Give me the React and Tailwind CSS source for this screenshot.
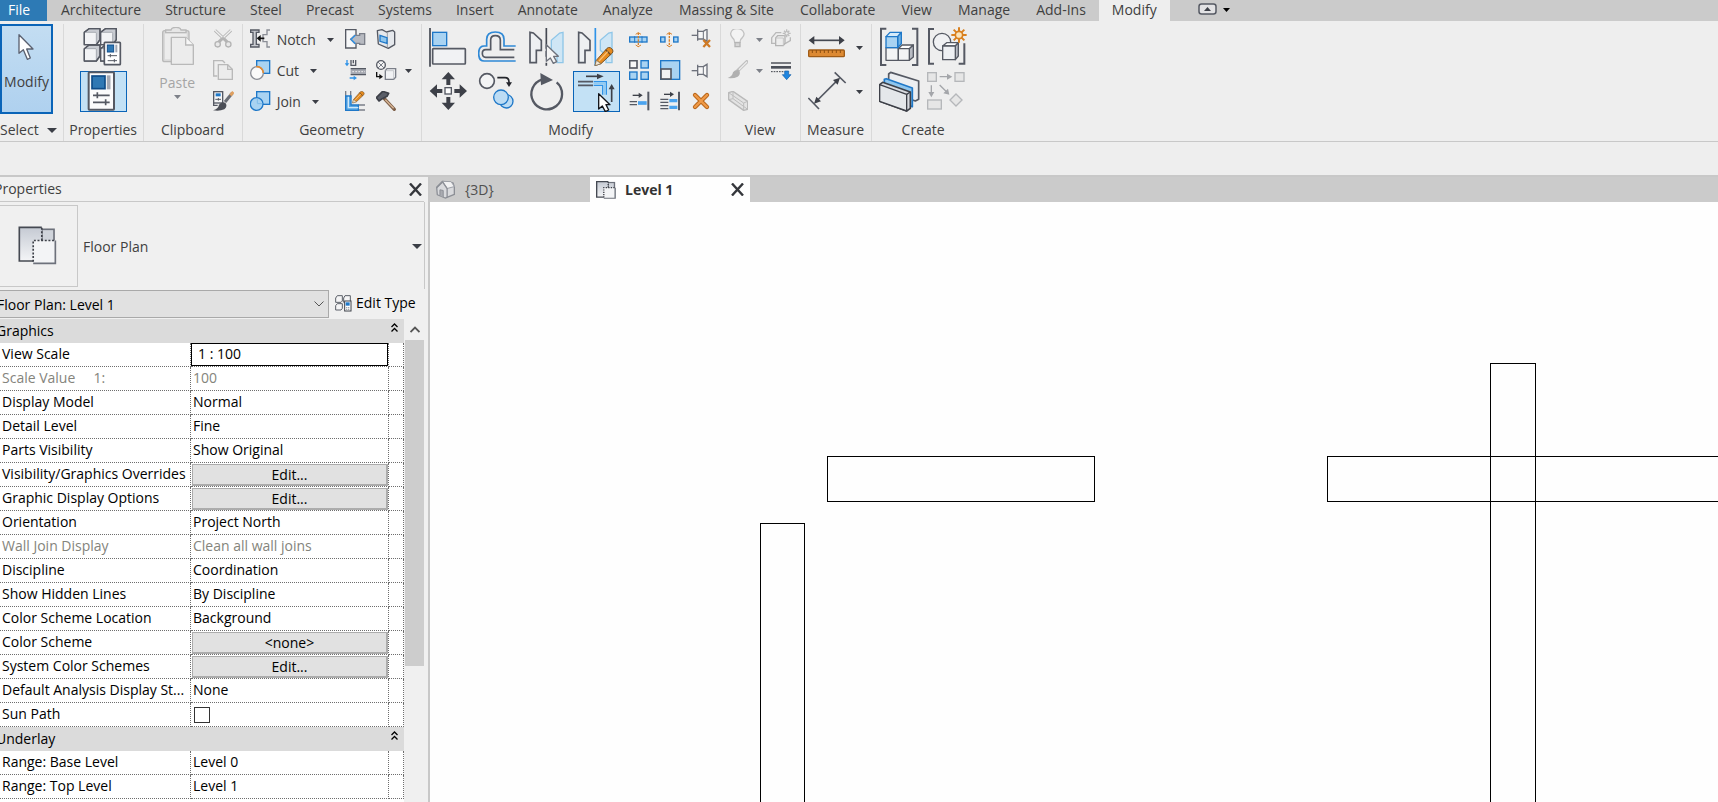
import React from "react";

const OUT = "#555963";
const BLUE = "#1f78c8";
const SKY = "#a9d3f2";
const ORANGE = "#d9822b";

function Icon({ box, w = 21, h = w, children }) {
  return (
    <svg
      width={w}
      height={h}
      viewBox={`${box} ${w * 3} ${h * 3}`}
      fill="none"
      strokeWidth="5"
      className="shrink-0"
      aria-hidden="true"
    >
      {children}
    </svg>
  );
}

function Caret({ className = "fill-[#3b3e46]", w = 7, h = 4 }) {
  return (
    <svg width={w} height={h} viewBox="0 0 14 8" preserveAspectRatio="none" className={`shrink-0 ${className}`} aria-hidden="true">
      <path d="M0 0H14L7 8Z" />
    </svg>
  );
}

/* ---------- large icons (41px) ---------- */

const Cursor = () => (
  <Icon box="50 99" w={21} h={27}>
    <path d="M59 104V160L72 149L84 178L93 174L82 147H101Z" fill="#fff" stroke="#5b6170" strokeWidth="4" strokeLinejoin="round" />
  </Icon>
);

const TypeProperties = () => (
  <Icon box="246 81" w={41}>
    {[
      [250, 97],
      [299, 97],
      [250, 146],
      [299, 146],
    ].map(([x, y]) => (
      <g key={`${x}-${y}`} stroke={OUT} strokeWidth="4" strokeLinejoin="round">
        <path d={`M${x} ${y}L${x + 14} ${y - 11}H${x + 47}V${y + 22}L${x + 36} ${y + 37}H${x}Z`} fill="#c9ccd2" />
        <rect x={x} y={y} width="36" height="37" rx="3" fill="#f2f3f5" stroke="#8b8f98" strokeWidth="2" />
        <path d={`M${x} ${y}L${x + 14} ${y - 11}H${x + 47}V${y + 22}L${x + 36} ${y + 37}H${x}Z`} />
      </g>
    ))}
    <rect x="310" y="127" width="48" height="67" rx="2" fill="#fff" stroke={OUT} />
    <rect x="319" y="135" width="19" height="21" fill="#2f78b4" stroke="#124f8c" strokeWidth="3" />
    <path d="M346 134V157" stroke="#a4a8b2" strokeWidth="6" />
    <path d="M320 167H348M328 162V172M320 182H348M340 177V187" stroke={OUT} strokeWidth="3" />
  </Icon>
);

const PropertiesDoc = () => (
  <Icon box="246 213" w={41}>
    <rect x="263" y="217" width="76" height="112" rx="2" fill="#fbfbfc" stroke={OUT} strokeWidth="6" />
    <rect x="273" y="228" width="39" height="38" fill="#2f78b4" stroke="#0f4c88" />
    <path d="M323 226V268" stroke="#a4a8b2" strokeWidth="11" />
    <path d="M276 286H326M289 277V295M276 307H326M314 298V316" stroke={OUT} />
  </Icon>
);

const PasteIcon = () => (
  <Icon box="468 81" w={41}>
    <rect x="485" y="92" width="79" height="93" rx="6" fill="#d9d9d9" stroke="#b9b9b9" strokeWidth="4" />
    <rect x="492" y="100" width="65" height="78" fill="#ececec" />
    <path d="M494 98V90H510Q512 82 525 82Q538 82 540 90H555V98Z" fill="#e6e6e6" stroke="#b9b9b9" strokeWidth="4" />
    <path d="M511 112H554L577 135V193H511Z" fill="#ececec" stroke="#b9b9b9" strokeWidth="4" strokeLinejoin="round" />
    <path d="M554 112V135H577" fill="#f7f7f7" stroke="#b9b9b9" strokeWidth="4" />
  </Icon>
);

const AlignIcon = () => (
  <Icon box="24 81" w={41}>
    <path d="M27 84V200" stroke="#444852" />
    <rect x="35" y="97" width="42" height="40" fill={SKY} stroke={BLUE} strokeWidth="4" />
    <rect x="35" y="146" width="98" height="46" rx="2" fill="#f1f2f4" stroke={OUT} />
  </Icon>
);

const OffsetIcon = () => (
  <Icon box="171 81" w={41}>
    <path d="M284 138H249V118Q249 96 223 96Q197 96 197 118V138H189Q173 138 173 160Q173 183 189 183H284" stroke="#2f89d6" strokeWidth="5" />
    <path d="M280 149H238V120Q238 107 223 107Q209 107 209 120V149H194Q184 149 184 160Q184 172 194 172H280" stroke={OUT} strokeWidth="5" />
  </Icon>
);

const MirrorPickIcon = () => (
  <Icon box="318 81" w={41}>
    <path d="M327 97L337 99L361 121V151H346V188H327Z" fill="#eef0f2" stroke={OUT} />
    <path d="M426 97L416 99L391 121V151L408 165V188H426Z" fill="#cfe6f5" stroke="#8fc6e8" strokeWidth="4" />
    <path d="M376 84V146M376 153V170M376 188V197" stroke="#444852" />
    <path d="M376 134V184L388 174L397 190L407 185L398 169H412Z" fill="#f4f4f4" stroke="#6d717b" strokeWidth="4" strokeLinejoin="round" />
  </Icon>
);

const Pencil = ({ x, y, s = 1 }) => (
  <g transform={`translate(${x} ${y}) scale(${s})`}>
    <path d="M0 56L4 40L36 4Q40 0 46 2L52 7Q56 12 52 18L18 50Z" fill="#e58a1f" stroke="#7a5528" strokeWidth="3" strokeLinejoin="round" />
    <path d="M0 56L4 40L18 50Z" fill="#f4e6d0" stroke="#7a6a50" strokeWidth="2" />
    <path d="M32 8L47 23" stroke="#6a4a26" strokeWidth="4" />
    <path d="M12 42L38 14" stroke="#f8c27a" strokeWidth="4" />
  </g>
);

const MirrorDrawIcon = () => (
  <Icon box="465 81" w={41}>
    <path d="M473 97L483 99L507 121V151H492V188H473Z" fill="#eef0f2" stroke={OUT} />
    <path d="M573 97L563 99L538 121V151L555 165V188H573Z" fill="#cfe6f5" stroke="#8fc6e8" strokeWidth="4" />
    <path d="M523 84V197" stroke="#2f93e8" />
    <Pencil x={522} y={141} />
  </Icon>
);

const MoveIcon = () => (
  <Icon box="24 213" w={41}>
    <g fill="#3d4048">
      <path d="M82 216L102 238H88V255H76V238H62Z" />
      <path d="M82 330L102 308H88V291H76V308H62Z" />
      <path d="M26 273L48 253V267H64V279H48V293Z" />
      <path d="M138 273L116 253V267H100V279H116V293Z" />
    </g>
    <rect x="72" y="263" width="19" height="19" fill="#fff" stroke={OUT} strokeWidth="4" />
  </Icon>
);

const CopyModIcon = () => (
  <Icon box="171 213" w={41}>
    <circle cx="198" cy="243" r="22" fill="#f3f4f5" stroke={OUT} />
    <path d="M229 233H252Q264 233 264 246V252" stroke="#23252b" />
    <path d="M255 247H273L264 261Z" fill="#23252b" />
    <circle cx="256" cy="304" r="20" fill="#bcdcf4" stroke={BLUE} strokeWidth="4" />
    <circle cx="240" cy="292" r="22" fill="#bcdcf4" stroke={BLUE} strokeWidth="4" />
  </Icon>
);

const RotateIcon = () => (
  <Icon box="318 213" w={41}>
    <path d="M407 247A46 46 0 1 1 364 238" stroke="#555963" strokeWidth="7" />
    <path d="M358 219L396 240L360 256Z" fill="#555963" />
  </Icon>
);

const TrimIcon = () => (
  <Icon box="465 213" w={41}>
    <path d="M495 229H533" stroke="#3d4048" />
    <path d="M528 221L548 229L528 238Z" fill="#3d4048" />
    <path d="M471 245H516M471 256H516" stroke={OUT} strokeWidth="5" />
    <path d="M518 245H556V284M518 256H545V284" stroke="#2f93e8" strokeWidth="4" />
    <path d="M518 250H551V284" stroke="#8fcaf2" strokeWidth="5" />
    <path d="M572 306V262" stroke="#3d4048" />
    <path d="M563 268L572 252L581 268Z" fill="#3d4048" />
    <path d="M533 281V327L544 318L553 335L563 330L555 314H567Z" fill="#fff" stroke="#15171c" strokeWidth="4" strokeLinejoin="round" />
  </Icon>
);

const MeasureIcon = () => (
  <Icon box="324 81" w={41}>
    <path d="M340 121H420" stroke="#444852" />
    <path d="M326 121L343 108V134ZM434 121L417 108V134Z" fill="#3d4048" />
    <rect x="326" y="150" width="107" height="20" rx="3" fill="#dd8a33" stroke="#a05c17" strokeWidth="4" />
    <path d="M337 150V159M349 150V159M361 150V159M373 150V159M385 150V159M397 150V159M409 150V159M421 150V159" stroke="#8d5012" strokeWidth="3" />
  </Icon>
);

const DimensionIcon = () => (
  <Icon box="324 213" w={41}>
    <path d="M325 294L357 327M404 217L437 249M350 303L412 241" stroke="#555963" />
    <path d="M342 311L349 290L363 304ZM420 233L413 254L399 240Z" fill="#3d4048" />
  </Icon>
);

const GroupIcon = () => (
  <Icon box="531 81" w={41}>
    <path d="M553 86H537V195H553M630 86H646V195H630" stroke={OUT} strokeWidth="6" />
    <g stroke={OUT} strokeWidth="4" strokeLinejoin="round">
      <path d="M552 143H589V181H552Z" fill="#f3f4f5" />
      <path d="M589 146L600 135H634L622 146Z" fill="#fff" />
      <path d="M622 146L634 135V171L622 181Z" fill="#b9bcc4" />
      <path d="M589 146H622V181H589Z" fill="#f3f4f5" />
    </g>
    <g stroke={BLUE} strokeWidth="4" strokeLinejoin="round">
      <path d="M552 110L564 97H598L587 110Z" fill="#d5ebfa" />
      <path d="M587 110L598 97V131L587 143Z" fill="#6fb3e6" />
      <path d="M552 110H587V143H552Z" fill={SKY} />
    </g>
  </Icon>
);

const SimilarIcon = () => (
  <Icon box="675 81" w={41}>
    <path d="M696 87H681V191H696M770 191H787V130" stroke={OUT} strokeWidth="6" />
    <circle cx="720" cy="126" r="26" fill="#f0f1f3" stroke={OUT} strokeWidth="4" />
    <g stroke={OUT} strokeWidth="4" strokeLinejoin="round">
      <path d="M722 138L734 128H769L760 138Z" fill="#fff" />
      <path d="M760 138L769 128V168L760 179Z" fill="#b9bcc4" />
      <path d="M722 138H760V179H722Z" fill="#eef0f3" />
    </g>
    <path d="M771 82V128M748 105H794M755 89L787 121M787 89L755 121" stroke="#d9801f" strokeWidth="6" />
    <circle cx="771" cy="105" r="11" fill="#fbe3b8" stroke="#d9801f" />
  </Icon>
);

const AssemblyIcon = () => (
  <Icon box="531 213" w={41}>
    <g strokeLinejoin="round">
      <path d="M560 222L566 217L650 243V298L640 303L560 274Z" fill="#eceef1" stroke={OUT} />
      <path d="M547 238L553 236L631 264V320L547 290Z" fill="#8fc6ee" stroke={BLUE} />
      <path d="M533 254L542 247L625 276V325L614 333L533 304Z" fill="#d8dbe0" stroke="#3d4048" />
      <path d="M533 254L614 283V333L533 304Z" fill="#e4e7ea" stroke="#3d4048" strokeWidth="4" />
      <path d="M614 283L625 276" stroke="#3d4048" strokeWidth="4" />
    </g>
  </Icon>
);

const PartsIcon = () => (
  <Icon box="675 213" w={41}>
    <g stroke="#b5b7ba" strokeWidth="4" fill="#e6e6e6">
      <rect x="677" y="218" width="26" height="26" />
      <rect x="759" y="218" width="27" height="26" />
      <rect x="677" y="300" width="41" height="27" />
      <path d="M762 282L780 300L762 318L744 300Z" />
      <path d="M713 230H740M688 256V280M713 255L735 277" fill="none" stroke="#a4a6aa" />
    </g>
    <path d="M735 221L751 230L735 239ZM679 276H697L688 292ZM742 284L724 280L738 266Z" fill="#a4a6aa" />
  </Icon>
);

/* ---------- small icons (21px) ---------- */

const CutClip = () => (
  <Icon box="636 87">
    <path d="M642 91L684 131M690 91L648 131" stroke="#b4b4b4" strokeWidth="9" />
    <path d="M642 91L664 112M690 91L668 112" stroke="#efefef" strokeWidth="4" />
    <ellipse cx="650" cy="133" rx="8" ry="8" fill="#e8e8e8" stroke="#b4b4b4" strokeWidth="4" />
    <ellipse cx="682" cy="133" rx="8" ry="8" fill="#e8e8e8" stroke="#b4b4b4" strokeWidth="4" />
  </Icon>
);

const CopyClip = () => (
  <Icon box="636 180">
    <path d="M649 228H638V182H665L672 189" stroke="#b9b9b9" strokeWidth="4" />
    <path d="M652 194H680L694 208V238H652Z" fill="#ececec" stroke="#b9b9b9" strokeWidth="4" />
    <path d="M680 194V208H694" stroke="#b9b9b9" strokeWidth="4" />
  </Icon>
);

const MatchType = () => (
  <Icon box="636 273">
    <path d="M665 275H638V316H650" fill="#f7f7f7" stroke={OUT} strokeWidth="4" />
    <rect x="638" y="275" width="27" height="34" fill="#f7f7f7" stroke={OUT} strokeWidth="4" />
    <rect x="644" y="280" width="15" height="9" fill={BLUE} />
    <path d="M643 298H660M652 294V302" stroke={OUT} strokeWidth="3" />
    <path d="M694 279L672 306" stroke="#6a6d75" strokeWidth="9" />
    <path d="M697 276L688 286" stroke="#e0a060" strokeWidth="9" />
    <path d="M636 331Q652 327 654 314Q662 303 673 308Q681 318 670 328Q655 335 636 331Z" fill="#4c4f57" />
  </Icon>
);

const NotchIcon = () => (
  <Icon box="27 87">
    <path d="M29 90H54V97H46V133H54V141H29V133H36V97H29Z" fill="#c9cbd0" stroke={OUT} strokeWidth="4" />
    <path d="M87 90H78V104H66V125H78V141H87" stroke="#8b8e96" strokeWidth="4" />
    <path d="M52 115H70" stroke="#111" />
    <path d="M47 115L59 105V125Z" fill="#111" />
  </Icon>
);

const CutGeo = () => (
  <Icon box="27 180">
    <rect x="47" y="182" width="39" height="38" fill={SKY} stroke={BLUE} strokeWidth="4" />
    <circle cx="48" cy="219" r="19" fill="#fafafa" stroke="#8b8e96" strokeWidth="4" />
    <path d="M46 200A19 19 0 0 1 67 219" stroke="#e58a2f" />
  </Icon>
);

const JoinGeo = () => (
  <Icon box="27 273">
    <rect x="47" y="275" width="39" height="38" fill={SKY} stroke={BLUE} strokeWidth="4" />
    <circle cx="47" cy="312" r="19" fill={SKY} stroke={BLUE} strokeWidth="4" />
    <path d="M49 295V310M49 311H64" stroke="#7fbcea" strokeWidth="3" />
  </Icon>
);

const CopingIcon = () => (
  <Icon box="312 87">
    <path d="M314 89H345V107L330 118L345 130V144H314Z" fill="#f7f8f9" stroke={OUT} strokeWidth="4" />
    <path d="M341 106H356V101H371V133H356V130H341L329 118Z" fill="#b7bac1" stroke="#7b7f89" strokeWidth="4" />
    <path d="M343 106L330 118L343 131" stroke="#2f93e8" strokeWidth="4" />
  </Icon>
);

const WallOpening = () => (
  <Icon box="405 87">
    <path d="M409 92L423 89L436 96L455 91L461 96V134L442 145L412 132Z" fill="#e5e8ec" stroke={OUT} strokeWidth="4" strokeLinejoin="round" />
    <path d="M439 96V142" stroke="#9b9fa8" strokeWidth="3" />
    <path d="M417 106L438 113V130L417 124Z" fill="#8fc6ee" stroke={BLUE} strokeWidth="4" />
  </Icon>
);

const BeamJoins = () => (
  <Icon box="312 180">
    <path d="M318 180V192M326 234H341" stroke="#2f93e8" strokeWidth="4" />
    <path d="M311 190H325L318 199ZM338 227L348 234L338 241Z" fill="#2f93e8" />
    <path d="M330 180V196H344V180M337 180V190" stroke={OUT} strokeWidth="4" />
    <rect x="329" y="206" width="46" height="18" fill="#a5a8b0" />
    <path d="M329 206H375M329 224H375" stroke={OUT} strokeWidth="4" />
    <path d="M334 215H372" stroke="#eee" strokeWidth="3" strokeDasharray="5 4" />
  </Icon>
);

const UnjoinIcon = () => (
  <Icon box="405 180">
    <circle cx="420" cy="195" r="13" fill="#f4f4f4" stroke={OUT} strokeWidth="4" />
    <path d="M411 186L429 204M429 186L411 204" stroke="#7b7f89" strokeWidth="3" />
    <path d="M407 216V230H418" stroke="#111" strokeWidth="4" />
    <path d="M415 222L426 230L415 238Z" fill="#111" />
    <path d="M433 212L438 206H464V232L458 238H433Z" fill="#f1f2f4" stroke="#7b7f89" strokeWidth="4" />
    <path d="M458 238V212H433" stroke="#b0b3ba" strokeWidth="2" />
  </Icon>
);

const WallJoins = () => (
  <Icon box="312 273">
    <path d="M314 273V295M329 273V295M352 315H372M352 330H372" stroke="#7b7f89" strokeWidth="4" />
    <path d="M314 288V331H352V315H330V288Z" fill="#59a8e6" stroke={BLUE} strokeWidth="4" />
    <path d="M322 290V323H352" stroke="#cfe8fa" strokeWidth="4" />
    <Pencil x={335} y={273} s={0.64} />
  </Icon>
);

const HammerIcon = () => (
  <Icon box="405 273">
    <path d="M430 296L460 328" stroke="#7d5f48" strokeWidth="10" strokeLinecap="round" />
    <path d="M433 299L458 325" stroke="#d7b596" strokeWidth="4" />
    <path d="M406 293L425 274L443 280L438 289L424 296L414 303Z" fill="#5a5e68" stroke="#3d4048" strokeWidth="5" strokeLinejoin="round" />
  </Icon>
);

const SplitIcon = ({ box, x, gap }) => (
  <Icon box={box}>
    <rect x={x + 2} y="111" width={gap ? 13 : 52} height="15" fill={SKY} stroke={BLUE} strokeWidth="4" />
    {gap && <rect x={x + 41} y="111" width="13" height="15" fill={SKY} stroke={BLUE} strokeWidth="4" />}
    {!gap && <path d={`M${x + 17} 109V128M${x + 39} 109V128`} stroke={BLUE} strokeWidth="3" />}
    <path d={`M${x + 28} 98V140`} stroke={ORANGE} strokeWidth="4" strokeDasharray="7 3" />
    <path d={`M${x + 20} 103L${x + 28} 98L${x + 36} 103M${x + 20} 135L${x + 28} 140L${x + 36} 135`} stroke={ORANGE} strokeWidth="3" />
  </Icon>
);

const PinShape = () => (
  <g stroke="#6d717b" strokeWidth="4">
    <path d="M812 212H830" />
    <path d="M830 194V228M830 200H847L858 193V230L847 223H830" fill="#f6f6f6" />
    <path d="M847 200V223" strokeWidth="3" />
  </g>
);

const PinIcon = () => (
  <Icon box="810 180">
    <PinShape />
  </Icon>
);

const UnpinIcon = () => (
  <Icon box="810 87">
    <g transform="translate(0 -106)">
      <PinShape />
    </g>
    <path d="M847 120L867 141M867 120L847 141" stroke="#cf7a25" strokeWidth="7" />
  </Icon>
);

const ArrayIcon = () => (
  <Icon box="624 180">
    <rect x="626" y="182" width="22" height="22" fill="#f7f7f7" stroke={OUT} />
    <rect x="660" y="182" width="22" height="22" fill={SKY} stroke={BLUE} strokeWidth="4" />
    <rect x="626" y="216" width="22" height="22" fill={SKY} stroke={BLUE} strokeWidth="4" />
    <rect x="660" y="216" width="22" height="22" fill={SKY} stroke={BLUE} strokeWidth="4" />
  </Icon>
);

const ScaleIcon = () => (
  <Icon box="717 180">
    <rect x="719" y="182" width="57" height="56" fill={SKY} stroke={BLUE} strokeWidth="4" />
    <rect x="720" y="207" width="30" height="30" fill="#f1f2f4" stroke={OUT} />
  </Icon>
);

const TrimSingle = () => (
  <Icon box="624 273">
    <path d="M682 275V331" stroke={OUT} strokeWidth="6" />
    <path d="M635 286H656" stroke="#3d4048" strokeWidth="4" />
    <path d="M653 278L665 286L653 294Z" fill="#3d4048" />
    <path d="M626 305H648M626 314H648" stroke={OUT} strokeWidth="4" />
    <path d="M651 309H677" stroke="#4aa3ee" strokeWidth="11" />
  </Icon>
);

const TrimMultiple = () => (
  <Icon box="717 273">
    <path d="M774 275V331" stroke={OUT} strokeWidth="6" />
    <path d="M729 283H750" stroke="#3d4048" strokeWidth="4" />
    <path d="M747 275L759 283L747 291Z" fill="#3d4048" />
    <path d="M718 298H742M718 307H742M718 317H742M718 326H742" stroke={OUT} strokeWidth="4" />
    <path d="M745 302H769M745 322H769" stroke="#4aa3ee" strokeWidth="10" />
  </Icon>
);

const DeleteIcon = () => (
  <Icon box="810 273">
    <path d="M822 285L858 321M858 285L822 321" stroke="#b9671b" strokeWidth="13" strokeLinecap="round" />
    <path d="M822 285L858 321M858 285L822 321" stroke="#f09a47" strokeWidth="7" strokeLinecap="round" />
  </Icon>
);

const BulbIcon = () => (
  <Icon box="78 87">
    <path d="M101 127Q101 118 94 113Q88 105 89 100Q92 86 108 86Q125 86 129 100Q130 106 124 113Q117 118 117 127Z" fill="#f3f3f3" stroke="#c2c2c2" strokeWidth="4" />
    <path d="M102 128H117V140H102Z" fill="#d5d5d5" stroke="#b5b5b5" strokeWidth="4" />
  </Icon>
);

const BrushIcon = () => (
  <Icon box="78 180">
    <path d="M141 182L109 213" stroke="#bdbdbd" strokeWidth="10" />
    <path d="M138 185L114 209" stroke="#ececec" strokeWidth="4" />
    <path d="M80 234Q94 230 96 217Q105 206 115 212Q120 222 110 230Q98 236 80 234Z" fill="#b0b0b0" />
  </Icon>
);

const SectionBox = () => (
  <Icon box="78 273">
    <path d="M83 278L96 274L140 304V328L128 331L83 299Z" fill="#e3e3e3" stroke="#b9b9b9" strokeWidth="4" strokeLinejoin="round" />
    <path d="M83 278L128 309V331M128 309L140 304M96 274V296L140 328M83 299L96 296" stroke="#bdbdbd" strokeWidth="3" />
  </Icon>
);

const OverrideIcon = () => (
  <Icon box="213 87">
    <path d="M216 112L228 98H244M250 134L271 122V112M215 112V130H226" stroke="#b9b9b9" strokeWidth="4" />
    <path d="M227 114L233 107H255V129L250 137H227Z" fill="#ededed" stroke="#b4b4b4" strokeWidth="4" />
    <path d="M250 137V114H227" stroke="#c6c6c6" strokeWidth="3" />
    <path d="M260 88V112M248 100H272M252 92L268 108M268 92L252 108" stroke="#bdbdbd" strokeWidth="4" />
    <circle cx="260" cy="100" r="5" fill="#eee" stroke="#bdbdbd" strokeWidth="3" />
  </Icon>
);

const ThinLines = () => (
  <Icon box="213 180">
    <path d="M213 189H273" stroke="#3d4048" strokeWidth="4" />
    <path d="M213 202H273" stroke="#4b4f58" strokeWidth="8" />
    <path d="M213 215H250" stroke="#3d4048" strokeWidth="3" strokeDasharray="5 3" />
    <path d="M254 213H266V224H273L260 239L247 224H254Z" fill="#1f86e0" stroke="#125ea8" strokeWidth="2" />
  </Icon>
);

const FloorPlanIcon = ({ w, h, line = 5, dash = "6 5" }) => (
  <svg width={w} height={h} viewBox="0 0 118 118" preserveAspectRatio="none" fill="none" strokeWidth={line} className="shrink-0" aria-hidden="true">
    <defs>
      <linearGradient id="sheet" x1="0" y1="0" x2="0" y2="1">
        <stop offset="0" stopColor="#c5cad3" />
        <stop offset="1" stopColor="#f4f5f7" />
      </linearGradient>
    </defs>
    <rect x="72" y="10" width="37" height="44" fill="#d0d4db" stroke="#6d717b" />
    <path d="M4 4H72V44H46V106H4Z" fill="url(#sheet)" />
    <path d="M72 4H4V106H46" stroke="#454952" />
    <rect x="46" y="44" width="67" height="68" fill="#f3f4f6" />
    <path d="M113 44V113H46" stroke="#6d717b" />
    <path d="M72 5V44M46 108V44H114" stroke="#3d4048" strokeDasharray={dash} />
  </svg>
);

const HouseIcon = () => (
  <svg width="21" height="19" viewBox="0 0 62 58" fill="none" className="shrink-0" aria-hidden="true">
    <path d="M4 22L22 4L54 9L58 22V44L30 55L6 45Z" fill="#d9dadd" stroke="#8c8f96" strokeWidth="4" strokeLinejoin="round" />
    <path d="M22 4L36 26L58 20L48 5Z" fill="#f1f1f2" stroke="#9c9fa6" strokeWidth="3" />
    <path d="M4 24L22 6L36 26V53" stroke="#8c8f96" strokeWidth="4" />
    <path d="M14 48V30L24 32V52" fill="#a9abb1" stroke="#8c8f96" strokeWidth="3" />
  </svg>
);

const CloseMark = () => (
  <svg width="13" height="13" viewBox="0 0 13 13" className="shrink-0 stroke-[#35373c]" strokeWidth="2.4" aria-hidden="true">
    <path d="M1 0.5L12 12.5M12 0.5L1 12.5" />
  </svg>
);

const EditTypeIcon = () => (
  <svg width="17" height="17" viewBox="0 0 51 51" fill="none" strokeWidth="3" className="shrink-0" aria-hidden="true">
    <path d="M2 9L7 2H22V18L18 22H2ZM26 9L30 2H46V18L42 22H26ZM2 32L7 26H22V40L18 45H2Z" fill="#f5f5f6" stroke="#5b5f68" />
    <rect x="29" y="18" width="19" height="30" fill="#fff" stroke="#3d4048" />
    <rect x="32" y="22" width="12" height="10" fill={BLUE} />
    <path d="M33 38H45M33 43H45" stroke="#5b5f68" strokeWidth="2" strokeDasharray="4 2" />
  </svg>
);

/* ---------- ribbon ---------- */

const DISCIPLINE_TABS = ["Architecture", "Structure", "Steel", "Precast", "Systems", "Insert", "Annotate"];
const TOOL_TABS = ["Analyze", "Massing & Site", "Collaborate", "View", "Manage", "Add-Ins"];

function TabBar() {
  return (
    <nav className="flex h-[21px] items-stretch bg-[#cbcbcb] leading-[17px]" aria-label="Ribbon tabs">
      <button className="mr-[2px] w-[47px] bg-[#2d7ab5] pr-3 pb-[3px] pl-2 text-left text-white">File</button>
      {DISCIPLINE_TABS.map((t) => (
        <button key={t} className="px-3 pb-[3px] whitespace-nowrap">{t}</button>
      ))}
      {TOOL_TABS.map((t) => (
        <button key={t} className="px-[13px] pb-[3px] whitespace-nowrap">{t}</button>
      ))}
      <button className="bg-[#eeeeee] px-[13px] pb-[3px] whitespace-nowrap">Modify</button>
      <button className="ml-7 flex items-start gap-[6px] pt-[3px]" aria-label="Minimize ribbon">
        <svg width="19" height="12" viewBox="0 0 19 12" fill="none" aria-hidden="true">
          <rect x="1" y="1" width="17" height="10" rx="2.5" fill="#e2e2e4" stroke="#555963" strokeWidth="1.5" />
          <path d="M6 8L9.500 4L13 8Z" fill="#3d4048" />
        </svg>
        <Caret className="mt-[5px] fill-black" />
      </button>
    </nav>
  );
}

function Big({ label, active, children }) {
  return (
    <button
      aria-label={label}
      className={
        active
          ? "flex h-[41px] w-[47px] justify-center bg-[#c3e1f5] shadow-[inset_0_0_0_1px_#0a64b8]"
          : "flex h-[41px] w-[47px] justify-center"
      }
    >
      {children}
    </button>
  );
}

function Small({ label, text, caret, children }) {
  return (
    <button aria-label={label} className="flex h-[31px] items-center">
      {children}
      {text && <span className="ml-[6px] whitespace-nowrap">{text}</span>}
      {caret && <span className={text ? "ml-[11px]" : "ml-2"}><Caret className={caret} /></span>}
    </button>
  );
}

function Panel({ title, pad, last, caret, children }) {
  return (
    <section className={last ? "flex flex-col" : "flex flex-col border-r border-[#d9d9d9]"}>
      <div className={`flex h-[93px] items-start ${pad}`}>{children}</div>
      <h2
        className={
          caret
            ? "flex h-6 items-center justify-center gap-2 pt-[2px] pr-[6px] whitespace-nowrap"
            : "flex h-6 items-center justify-center pt-[2px] whitespace-nowrap"
        }
      >
        {title}
        {caret && <Caret w={10} h={5} />}
      </h2>
    </section>
  );
}

const COL = "flex flex-col";
const PAIR = "mt-[3px] flex flex-col gap-[3px]";

function Ribbon() {
  const pale = "fill-[#7d8088]";
  const dark = "fill-[#3b3e46]";
  return (
    <div className="flex h-[121px] border-b border-[#c8c8c8] bg-[#eeeeee] pt-[3px]">
      <Panel title="Select" pad="pr-[9px]" caret>
        <button className="flex h-[90px] w-[53px] flex-col items-center gap-3 border-2 border-[#0a64b8] bg-linear-to-b from-[#c3ddf2] to-[#afd1ef] pt-[7px]">
          <Cursor />
          <span>Modify</span>
        </button>
      </Panel>
      <Panel title="Properties" pad="px-4">
        <div className={PAIR}>
          <Big label="Type Properties"><TypeProperties /></Big>
          <Big label="Properties" active><PropertiesDoc /></Big>
        </div>
      </Panel>
      <Panel title="Clipboard" pad="gap-3 pr-2 pl-[10px]">
        <button className="mt-[3px] flex w-[47px] flex-col items-center text-[#a5a5a5]">
          <PasteIcon />
          <span className="mt-[5px]">Paste</span>
          <Caret className={`mt-[2px] ${pale}`} />
        </button>
        <div className={COL}>
          <Small label="Cut to clipboard"><CutClip /></Small>
          <Small label="Copy to clipboard"><CopyClip /></Small>
          <Small label="Match type"><MatchType /></Small>
        </div>
      </Panel>
      <Panel title="Geometry" pad="pr-[9px] pl-[7px]">
        <div className="flex w-[95px] flex-col">
          <Small text="Notch" caret={dark}><NotchIcon /></Small>
          <Small text="Cut" caret={dark}><CutGeo /></Small>
          <Small text="Join" caret={dark}><JoinGeo /></Small>
        </div>
        <div className="mr-[10px] flex flex-col">
          <Small label="Coping"><CopingIcon /></Small>
          <Small label="Beam joins"><BeamJoins /></Small>
          <Small label="Wall joins"><WallJoins /></Small>
        </div>
        <div className={COL}>
          <Small label="Wall opening"><WallOpening /></Small>
          <Small label="Split face" caret={dark}><UnjoinIcon /></Small>
          <Small label="Demolish"><HammerIcon /></Small>
        </div>
      </Panel>
      <Panel title="Modify" pad="pr-2 pl-1">
        <div className="mt-[3px] grid grid-cols-4 gap-x-[2px] gap-y-[3px]">
          <Big label="Align"><AlignIcon /></Big>
          <Big label="Offset"><OffsetIcon /></Big>
          <Big label="Mirror, pick axis"><MirrorPickIcon /></Big>
          <Big label="Mirror, draw axis"><MirrorDrawIcon /></Big>
          <Big label="Move"><MoveIcon /></Big>
          <Big label="Copy"><CopyModIcon /></Big>
          <Big label="Rotate"><RotateIcon /></Big>
          <Big label="Trim or extend to corner" active><TrimIcon /></Big>
        </div>
        <div className="ml-[9px] grid grid-cols-3 gap-x-[10px]">
          <Small label="Split element"><SplitIcon box="624 87" x={624} /></Small>
          <Small label="Split with gap"><SplitIcon box="717 87" x={717} gap /></Small>
          <Small label="Unpin"><UnpinIcon /></Small>
          <Small label="Array"><ArrayIcon /></Small>
          <Small label="Scale"><ScaleIcon /></Small>
          <Small label="Pin"><PinIcon /></Small>
          <Small label="Trim or extend single element"><TrimSingle /></Small>
          <Small label="Trim or extend multiple elements"><TrimMultiple /></Small>
          <Small label="Delete"><DeleteIcon /></Small>
        </div>
      </Panel>
      <Panel title="View" pad="gap-2 pr-2 pl-[6px]">
        <div className={COL}>
          <Small label="Hide in view" caret={pale}><BulbIcon /></Small>
          <Small label="Override graphics" caret={pale}><BrushIcon /></Small>
          <Small label="Selection box"><SectionBox /></Small>
        </div>
        <div className={COL}>
          <Small label="Displace elements"><OverrideIcon /></Small>
          <Small label="Linework"><ThinLines /></Small>
        </div>
      </Panel>
      <Panel title="Measure" pad="pr-2 pl-1">
        <div className={PAIR}>
          <div className="flex items-center gap-1">
            <Big label="Measure"><MeasureIcon /></Big>
            <button aria-label="Measure options"><Caret /></button>
          </div>
          <div className="flex items-center gap-1">
            <Big label="Dimension"><DimensionIcon /></Big>
            <button aria-label="Dimension options"><Caret /></button>
          </div>
        </div>
      </Panel>
      <Panel title="Create" pad="px-1" last>
        <div className="mt-[3px] grid grid-cols-2 gap-x-px gap-y-[3px]">
          <Big label="Create group"><GroupIcon /></Big>
          <Big label="Create similar"><SimilarIcon /></Big>
          <Big label="Create assembly"><AssemblyIcon /></Big>
          <Big label="Create parts"><PartsIcon /></Big>
        </div>
      </Panel>
    </div>
  );
}

/* ---------- properties palette ---------- */

const GRAPHICS = [
  { name: "View Scale", value: "1 : 100", kind: "input" },
  { name: "Scale Value     1:", value: "100", muted: true },
  { name: "Display Model", value: "Normal" },
  { name: "Detail Level", value: "Fine" },
  { name: "Parts Visibility", value: "Show Original" },
  { name: "Visibility/Graphics Overrides", value: "Edit...", kind: "button" },
  { name: "Graphic Display Options", value: "Edit...", kind: "button" },
  { name: "Orientation", value: "Project North" },
  { name: "Wall Join Display", value: "Clean all wall joins", muted: true },
  { name: "Discipline", value: "Coordination" },
  { name: "Show Hidden Lines", value: "By Discipline" },
  { name: "Color Scheme Location", value: "Background" },
  { name: "Color Scheme", value: "<none>", kind: "button" },
  { name: "System Color Schemes", value: "Edit...", kind: "button" },
  { name: "Default Analysis Display St...", value: "None" },
  { name: "Sun Path", kind: "check" },
];

const UNDERLAY = [
  { name: "Range: Base Level", value: "Level 0" },
  { name: "Range: Top Level", value: "Level 1" },
];

function GroupHeader({ title }) {
  return (
    <tr>
      <th colSpan={3} className="h-6 bg-[#dbdbdb] p-0 text-left font-normal">
        <button className="-ml-1 flex h-6 w-full items-center justify-between pr-[2px]">
          {title}
          <svg width="7" height="9" viewBox="0 0 7 9" fill="none" stroke="#000" strokeWidth="1.3" className="mb-2" aria-hidden="true">
            <path d="M0.500 4L3.500 1L6.500 4M0.500 8.500L3.500 5.500L6.500 8.500" />
          </svg>
        </button>
      </th>
    </tr>
  );
}

function PropRow({ row }) {
  const id = row.name.toLowerCase().replace(/[^a-z]+/g, "-");
  const dots = "h-6 border-r border-b border-dotted border-[#6e6e6e]";
  const tone = row.muted ? "text-[#84847c]" : "text-black";
  const plain = !row.kind;
  return (
    <tr className={tone}>
      <th className={`${dots} overflow-hidden p-0 pb-[2px] pl-[2px] text-left font-normal whitespace-pre`}>
        <label htmlFor={id}>{row.name}</label>
      </th>
      <td className={plain ? `${dots} p-0 pb-[2px] pl-[2px]` : `${dots} p-0`}>
        {row.kind === "input" && (
          <input id={id} defaultValue={row.value} className="block h-[23px] w-full border border-black bg-white pb-[2px] pl-[6px] outline-none" />
        )}
        {row.kind === "button" && (
          <button id={id} className="mt-px ml-px block h-[22px] w-[196px] border border-r-2 border-b-2 border-[#acacac] bg-[#e1e1e1] leading-[19px]">
            {row.value}
          </button>
        )}
        {row.kind === "check" && (
          <input id={id} type="checkbox" className="ml-[3px] block size-4 appearance-none border border-[#333] bg-white" />
        )}
        {plain && <output id={id}>{row.value}</output>}
      </td>
      <td className={`${dots} p-0`} />
    </tr>
  );
}

function Palette() {
  return (
    <aside className="flex w-[430px] shrink-0 flex-col overflow-hidden border-r-2 border-[#c8c8c8] bg-[#f0f0f0]">
      <div className="mr-1 flex h-[25px] shrink-0 items-center justify-between border-b border-[#c8c8c8] pr-[2px]">
        <h2 className="-ml-[6px] text-[#404040]">Properties</h2>
        <button aria-label="Close properties"><CloseMark /></button>
      </div>
      <div className="mr-[3px] flex h-[87px] shrink-0 items-center border-r border-[#c8c8c8] pr-[2px] text-[#404040]">
        <div className="flex h-[82px] w-[78px] items-center justify-center border border-l-0 border-[#c8c8c8] pr-[2px]">
          <FloorPlanIcon w={39} h={39} />
        </div>
        <button className="flex flex-1 items-center justify-between pt-[2px] pl-[5px]">
          Floor Plan
          <Caret w={10} h={5} />
        </button>
      </div>
      <div className="mt-px flex h-[29px] shrink-0 items-start">
        <div className="relative -ml-1 w-[333px]">
          <select aria-label="View instance" className="block h-7 w-full appearance-none border border-[#a9a9a9] bg-[#e1e1e1] pt-[2px] text-black">
            <option>Floor Plan: Level 1</option>
          </select>
          <svg width="10" height="6" viewBox="0 0 10 6" fill="none" stroke="#555" className="pointer-events-none absolute top-[11px] right-[5px]" aria-hidden="true">
            <path d="M0.500 0.500L5 5L9.500 0.500" />
          </svg>
        </div>
        <button className="ml-[6px] flex h-[26px] items-center gap-1 whitespace-nowrap text-black">
          <EditTypeIcon />
          Edit Type
        </button>
      </div>
      <div className="flex min-h-0 flex-1 overflow-hidden">
        <div className="w-[404px] overflow-hidden bg-white">
          <table className="w-full table-fixed border-separate border-spacing-0 text-black">
            <colgroup>
              <col className="w-[191px]" />
              <col className="w-[198px]" />
              <col className="w-[15px]" />
            </colgroup>
            <tbody>
              <GroupHeader title="Graphics" />
              {GRAPHICS.map((r) => <PropRow key={r.name} row={r} />)}
              <GroupHeader title="Underlay" />
              {UNDERLAY.map((r) => <PropRow key={r.name} row={r} />)}
            </tbody>
          </table>
        </div>
        <div className="ml-px flex w-[19px] flex-col bg-[#f0f0f0]">
          <button aria-label="Scroll up" className="flex h-[21px] shrink-0 items-center justify-center">
            <svg width="10" height="7" viewBox="0 0 10 7" fill="none" stroke="#555" strokeWidth="1.8" aria-hidden="true">
              <path d="M0.500 6L5 1.500L9.500 6" />
            </svg>
          </button>
          <div className="h-[326px] bg-[#cdcdcd]" />
        </div>
      </div>
    </aside>
  );
}

/* ---------- drawing area ---------- */

function Canvas() {
  return (
    <main className="flex min-w-0 flex-1 flex-col bg-[#fefefe]">
      <div className="flex h-[25px] shrink-0 bg-[#cbcbcb]" role="tablist">
        <button role="tab" aria-selected="false" className="flex w-40 items-center gap-[9px] pl-[5px] text-[#505050]">
          <HouseIcon />
          {"{3D}"}
        </button>
        <div className="flex w-40 items-center bg-[#fefefe] pr-[6px] pl-[6px]">
          <button role="tab" aria-selected="true" className="flex flex-1 items-center gap-[9px] font-bold text-[#333]">
            <FloorPlanIcon w={20} h={18} line={8} dash="8 7" />
            Level 1
          </button>
          <button aria-label="Close view"><CloseMark /></button>
        </div>
      </div>
      <svg className="min-h-0 w-full flex-1" fill="none" stroke="#000" strokeWidth="1" shapeRendering="crispEdges" role="img" aria-label="Wall layout">
        <rect x="397.500" y="254.500" width="267" height="45" />
        <rect x="330.500" y="321.500" width="44" height="2000" />
        <rect x="1060.500" y="161.500" width="45" height="2000" />
        <rect x="897.500" y="254.500" width="2000" height="45" />
      </svg>
    </main>
  );
}

export default function App() {
  return (
    <div className="flex h-screen flex-col overflow-hidden bg-[#eeeeee] font-['Open_Sans','Noto_Sans',sans-serif] text-[14px] leading-5 text-[#404040]">
      <TabBar />
      <Ribbon />
      <div className="h-[35px] shrink-0 border-b-2 border-[#c8c8c8]" />
      <div className="flex min-h-0 flex-1">
        <Palette />
        <Canvas />
      </div>
    </div>
  );
}
